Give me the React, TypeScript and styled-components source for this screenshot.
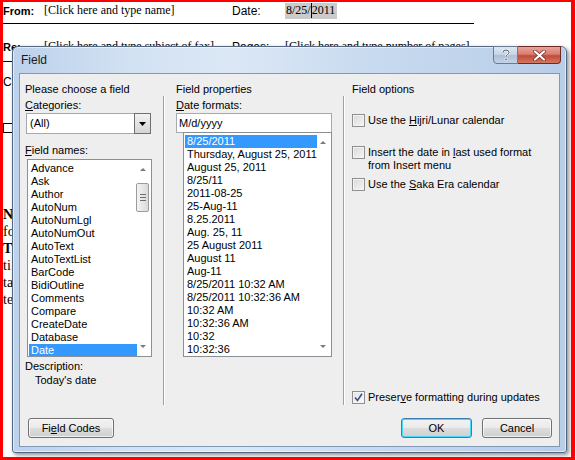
import styled, { createGlobalStyle, css } from 'styled-components';

const GlobalStyle = createGlobalStyle`
  html, body {
    margin: 0;
    padding: 0;
    background: #fff;
  }
`;

const categories = [
  'Advance', 'Ask', 'Author', 'AutoNum', 'AutoNumLgl', 'AutoNumOut', 'AutoText',
  'AutoTextList', 'BarCode', 'BidiOutline', 'Comments', 'Compare', 'CreateDate',
  'Database', 'Date',
];

const formats = [
  '8/25/2011', 'Thursday, August 25, 2011', 'August 25, 2011', '8/25/11', '2011-08-25',
  '25-Aug-11', '8.25.2011', 'Aug. 25, 11', '25 August 2011', 'August 11', 'Aug-11',
  '8/25/2011 10:32 AM', '8/25/2011 10:32:36 AM', '10:32 AM', '10:32:36 AM', '10:32',
  '10:32:36',
];

function App() {
  return (
    <>
      <GlobalStyle />
      <Screen>
        <Doc>
          <DocRow>
            <DocLabel $bold $w={41}>From:</DocLabel>
            <DocValue $w={188}>[Click here and type name]</DocValue>
            <DocLabel $w={53}>Date:</DocLabel>
            <DateField>8/25/<Caret />2011</DateField>
          </DocRow>
          <Rule $gap={4} />
          <DocRow $top={14}>
            <DocLabel $bold $w={41}>Re:</DocLabel>
            <DocValue $w={188}>[Click here and type subject of fax]</DocValue>
            <DocLabel $w={53}>Pages:</DocLabel>
            <DocValue $w={190}>[Click here and type number of pages]</DocValue>
          </DocRow>
          <Rule $gap={6} />
          <DocRow $top={11}>
            <DocLabel $w={41}>CC:</DocLabel>
          </DocRow>
          <DocRow $top={29}>
            <DocBox />
          </DocRow>
          {/* only the first letters of the notes peek out beside the dialog */}
          <Notes>
            <b>N</b><br />
            fo<br />
            <b>T</b><br />
            ti<br />
            ta<br />
            te
          </Notes>
        </Doc>

        <Dialog>
          <TitleBar>
            <Title>Field</Title>
            <Caption>
              <CapButton>
                <svg width="10" height="12" viewBox="0 0 10 12">
                  <path d="M2 3.5 Q2 1 5 1 Q8 1 8 3.5 Q8 5 6 6 Q5 6.6 5 8" fill="none" stroke="#fff" strokeWidth="2.2" />
                  <path d="M2 3.5 Q2 1 5 1 Q8 1 8 3.5 Q8 5 6 6 Q5 6.6 5 8" fill="none" stroke="#3d4a5c" strokeWidth="0.9" />
                  <rect x="4" y="9.2" width="2" height="2" fill="#3d4a5c" stroke="#fff" strokeWidth="0.6" />
                </svg>
              </CapButton>
              <CapButton $close>
                <svg width="13" height="11" viewBox="0 0 13 11">
                  <path d="M2 1.5 L11 9.5 M11 1.5 L2 9.5" stroke="#6b2a22" strokeWidth="3.6" strokeLinecap="round" />
                  <path d="M2 1.5 L11 9.5 M11 1.5 L2 9.5" stroke="#fff" strokeWidth="2.2" strokeLinecap="round" />
                </svg>
              </CapButton>
            </Caption>
          </TitleBar>

          <Client>
            <Columns>
              <Column $pad={5}>
                <Label>Please choose a field</Label>
                <Label $top={2}><u>C</u>ategories:</Label>
                <Select>
                  <SelectText>(All)</SelectText>
                  <DropButton>
                    <svg width="7" height="4" viewBox="0 0 7 4"><path d="M0 0 H7 L3.5 4 Z" fill="#000" /></svg>
                  </DropButton>
                </Select>
                <Label $top={9}><u>F</u>ield names:</Label>
                <ListBox $w={125} $h={198} $top={2} $left={2}>
                  {categories.map((c) => (
                    <Item key={c} $selected={c === 'Date'} $w={106}>{c}</Item>
                  ))}
                  <ScrollArrow $down={false} style={{ top: 8 }} />
                  <Thumb>
                    <Grip /><Grip /><Grip />
                  </Thumb>
                  <ScrollArrow $down style={{ bottom: 8 }} />
                </ListBox>
                <Label $top={2}>Description:</Label>
                <Label $indent={10}>Today's date</Label>
              </Column>

              <Separator />

              <Column $pad={11}>
                <Label>Field properties</Label>
                <Label $top={2}><u>D</u>ate formats:</Label>
                <TextInput>M/d/yyyy</TextInput>
                <ListBox $w={149} $h={225} $top={-1} $left={7}>
                  {formats.map((f, i) => (
                    <Item key={f} $selected={i === 0} $w={130}>{f}</Item>
                  ))}
                  <ScrollArrow $down={false} style={{ top: 8 }} />
                  <ScrollArrow $down style={{ bottom: 8 }} />
                </ListBox>
              </Column>

              <Separator />

              <Column $pad={7}>
                <Label>Field options</Label>
                <Option $top={18}>
                  <Check />
                  <span>Use the <u>H</u>ijri/Lunar calendar</span>
                </Option>
                <Option $top={19}>
                  <Check />
                  <span>Insert the date in <u>l</u>ast used format<br />from Insert menu</span>
                </Option>
                <Option $top={6}>
                  <Check />
                  <span>Use the <u>S</u>aka Era calendar</span>
                </Option>
                <Option $top={0} $push>
                  <Check $checked>
                    <svg width="9" height="9" viewBox="0 0 9 9">
                      <path d="M1 4.5 L3.5 7.5 L8 0.8" fill="none" stroke="#3a4f8c" strokeWidth="1.6" />
                    </svg>
                  </Check>
                  <span>Preser<u>v</u>e formatting during updates</span>
                </Option>
              </Column>
            </Columns>

            <ButtonRow>
              <Button $w={86}>Fi<u>e</u>ld Codes</Button>
              <Spacer />
              <Button $w={71} $default>OK</Button>
              <Button $w={70}>Cancel</Button>
            </ButtonRow>
          </Client>
        </Dialog>
      </Screen>
    </>
  );
}

const Screen = styled.div`
  position: relative;
  width: 575px;
  height: 460px;
  box-sizing: border-box;
  border-style: solid;
  border-color: #ff0000;
  border-width: 2px 4px 3px 3px;
  background: #fff;
  overflow: hidden;
`;

const Doc = styled.div`
  font-family: "Liberation Serif", serif;
  font-size: 12px;
  color: #000;
`;

const DocRow = styled.div<{ $top?: number }>`
  display: flex;
  align-items: center;
  height: 17px;
  margin-top: ${(p) => p.$top ?? 0}px;
  white-space: nowrap;
`;

const DocLabel = styled.span<{ $bold?: boolean; $w: number }>`
  flex: none;
  width: ${(p) => p.$w}px;
  font-family: "Liberation Sans", Arial, sans-serif;
  font-size: ${(p) => (p.$bold ? 11 : 12)}px;
  font-weight: ${(p) => (p.$bold ? 700 : 400)};
`;

const DocValue = styled.span<{ $w: number }>`
  flex: none;
  width: ${(p) => p.$w}px;
`;

const DateField = styled.span`
  display: inline-flex;
  align-items: center;
  height: 16px;
  padding: 0 2px 0 1px;
  background: #cbcbcb;
`;

const Caret = styled.span`
  width: 1px;
  height: 15px;
  background: #000;
`;

const Rule = styled.div<{ $gap: number }>`
  width: 472px;
  height: 1px;
  margin: ${(p) => p.$gap}px 0 0 -1px;
  background: #000;
`;

const DocBox = styled.span`
  width: 8px;
  height: 8px;
  border: 1px solid #000;
`;

const Notes = styled.p`
  margin: 70px 0 0;
  font-size: 14px;
  line-height: 17px;
  white-space: nowrap;
`;

const Dialog = styled.div`
  position: absolute;
  left: 9px;
  top: 44px;
  width: 555px;
  height: 407px;
  box-sizing: border-box;
  display: flex;
  flex-direction: column;
  padding: 0 6px 5px;
  border: 1px solid #56687f;
  border-radius: 6px 6px 3px 3px;
  background: linear-gradient(to right, #bcd1eb 0%, #d3e2f3 22%, #dbe7f5 40%, #c8daef 65%, #b8cde8 100%);
  box-shadow: inset 0 0 0 1px rgba(255, 255, 255, 0.55), 2px 2px 4px rgba(0, 0, 0, 0.45);
  font-family: "Liberation Sans", Arial, sans-serif;
  font-size: 11px;
  color: #000;
`;

const TitleBar = styled.div`
  display: flex;
  align-items: flex-start;
  justify-content: space-between;
  height: 26px;
  flex: none;
`;

const Title = styled.div`
  padding: 6px 0 0 2px;
  font-size: 12px;
  color: #1a1a1a;
`;

const Caption = styled.div`
  display: flex;
  margin: -1px -1px 0 0;
`;

const CapButton = styled.div<{ $close?: boolean }>`
  display: flex;
  align-items: center;
  justify-content: center;
  height: 18px;
  width: ${(p) => (p.$close ? 43 : 25)}px;
  box-sizing: border-box;
  border: 1px solid #6a7a90;
  background: linear-gradient(#dde7f3 0%, #c5d4e6 48%, #aebfd6 52%, #c4d3e6 100%);
  border-radius: 0 0 0 4px;
  ${(p) =>
    p.$close &&
    css`
      border-color: #6b2b25;
      border-left: none;
      border-radius: 0 0 4px 0;
      background: linear-gradient(#e8a59b 0%, #d67d70 45%, #c24a38 55%, #d5775f 100%);
    `}
`;

const Client = styled.div`
  flex: 1;
  display: flex;
  flex-direction: column;
  padding-top: 8px;
  border: 1px solid #8398b3;
  background: #eeeeee;
`;

const Columns = styled.div`
  display: grid;
  grid-template-columns: 143px 2px 178px 2px 1fr;
  height: 323px;
`;

const Column = styled.div<{ $pad: number }>`
  display: flex;
  flex-direction: column;
  align-items: flex-start;
  padding-left: ${(p) => p.$pad}px;
  min-width: 0;
`;

const Separator = styled.div`
  margin-top: 14px;
  border-left: 1px solid #a0a0a0;
  border-right: 1px solid #ffffff;
`;

const Label = styled.div<{ $top?: number; $indent?: number }>`
  height: 14px;
  line-height: 14px;
  margin-top: ${(p) => p.$top ?? 0}px;
  padding-left: ${(p) => p.$indent ?? 0}px;
  white-space: nowrap;
`;

const Select = styled.div`
  display: flex;
  width: 125px;
  height: 21px;
  margin: 1px 0 0 1px;
  box-sizing: border-box;
  border: 1px solid #a5a9b1;
  background: #fff;
`;

const SelectText = styled.div`
  flex: 1;
  padding: 3px 0 0 3px;
`;

const DropButton = styled.div`
  display: flex;
  align-items: center;
  justify-content: center;
  width: 17px;
  box-sizing: border-box;
  border: 1px solid #6f6f6f;
  margin: -1px -1px -1px 0;
  background: linear-gradient(#f2f2f2, #d4d4d4);
`;

const TextInput = styled.div`
  width: 156px;
  height: 20px;
  margin-top: 1px;
  box-sizing: border-box;
  padding: 3px 0 0 2px;
  border: 1px solid #a5a9b1;
  background: #fff;
`;

const ListBox = styled.div<{ $w: number; $h: number; $top: number; $left: number }>`
  position: relative;
  width: ${(p) => p.$w}px;
  height: ${(p) => p.$h}px;
  margin: ${(p) => p.$top}px 0 0 ${(p) => p.$left}px;
  box-sizing: border-box;
  padding: 2px 0 0 1px;
  border: 1px solid #8b8f96;
  background: #fff;
  overflow: hidden;
`;

const Item = styled.div<{ $selected?: boolean; $w: number }>`
  width: ${(p) => p.$w}px;
  height: 13px;
  line-height: 13px;
  padding-left: 2px;
  white-space: nowrap;
  overflow: hidden;
  ${(p) =>
    p.$selected &&
    css`
      background: #3399ff;
      color: #fff;
    `}
`;

const ScrollArrow = styled.div<{ $down: boolean }>`
  position: absolute;
  right: 5px;
  width: 0;
  height: 0;
  border-left: 3px solid transparent;
  border-right: 3px solid transparent;
  ${(p) =>
    p.$down
      ? css`border-top: 3px solid #7b7b7b;`
      : css`border-bottom: 3px solid #7b7b7b;`}
`;

const Thumb = styled.div`
  position: absolute;
  right: 2px;
  top: 23px;
  width: 13px;
  height: 29px;
  box-sizing: border-box;
  display: flex;
  flex-direction: column;
  align-items: center;
  justify-content: center;
  gap: 2px;
  border: 1px solid #9b9b9b;
  border-radius: 2px;
  background: linear-gradient(to right, #f4f4f4, #dadada);
`;

const Grip = styled.div`
  width: 6px;
  height: 1px;
  background: #6d6d6d;
`;

const Option = styled.div<{ $top: number; $push?: boolean }>`
  display: flex;
  align-items: flex-start;
  gap: 3px;
  margin-top: ${(p) => (p.$push ? 'auto' : `${p.$top}px`)};
  margin-bottom: ${(p) => (p.$push ? 1 : 0)}px;
  line-height: 13px;
  white-space: nowrap;
`;

const Check = styled.span<{ $checked?: boolean }>`
  display: flex;
  align-items: center;
  justify-content: center;
  flex: none;
  width: 13px;
  height: 13px;
  box-sizing: border-box;
  border: 1px solid #8e8f8f;
  background: linear-gradient(135deg, #d8d8d8, #f6f6f6);
  box-shadow: inset 0 0 0 1px #f4f4f4;
  ${(p) =>
    p.$checked &&
    css`
      background: linear-gradient(135deg, #e4e4e4, #fbfbfb);
    `}
`;

const ButtonRow = styled.div`
  display: flex;
  gap: 10px;
  margin-top: 13px;
  padding: 0 7px 0 8px;
`;

const Spacer = styled.div`
  flex: 1;
`;

const Button = styled.div<{ $w: number; $default?: boolean }>`
  display: flex;
  align-items: center;
  justify-content: center;
  width: ${(p) => p.$w}px;
  height: 20px;
  box-sizing: border-box;
  border: 1px solid #707070;
  border-radius: 3px;
  background: linear-gradient(#f2f2f2 0%, #ebebeb 48%, #dddddd 52%, #cfcfcf 100%);
  box-shadow: inset 0 0 0 1px rgba(255, 255, 255, 0.7);
  font-size: 11px;
  ${(p) =>
    p.$default &&
    css`
      border-color: #3c7fb1;
      box-shadow: inset 0 0 0 1px #48d7fb;
    `}
`;

export default App;
